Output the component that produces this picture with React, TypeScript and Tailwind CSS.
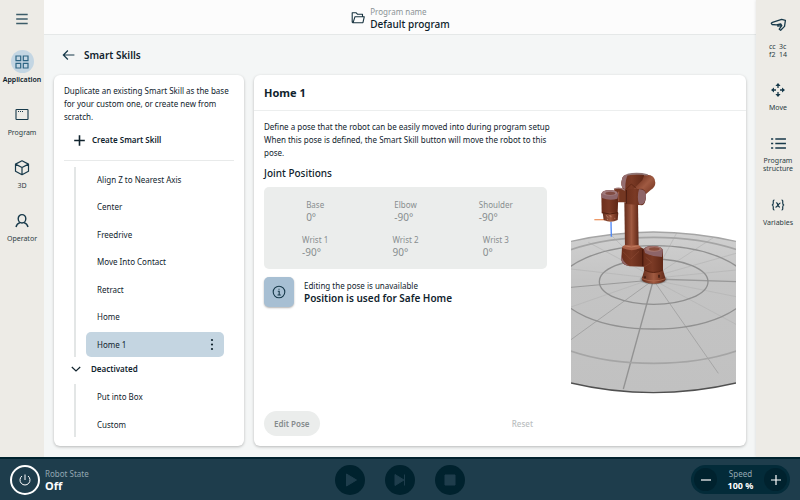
import React from 'react';

const skills = ['Align Z to Nearest Axis', 'Center', 'Freedrive', 'Move Into Contact', 'Retract', 'Home', 'Home 1'];
const deactivatedSkills = ['Put into Box', 'Custom'];

const joints = [
  { name: 'Base', value: '0°' },
  { name: 'Elbow', value: '-90°' },
  { name: 'Shoulder', value: '-90°' },
  { name: 'Wrist 1', value: '-90°' },
  { name: 'Wrist 2', value: '90°' },
  { name: 'Wrist 3', value: '0°' },
];

type IconProps = { className?: string; children: React.ReactNode; width?: number };

const Icon: React.FC<IconProps> = ({ className = 'size-4', children, width = 1 }) => (
  <svg
    viewBox="0 0 16 16"
    className={className}
    fill="none"
    stroke="currentColor"
    strokeWidth={width}
    aria-hidden="true"
  >
    {children}
  </svg>
);

const NavItem: React.FC<{ label: string; active?: boolean; children: React.ReactNode }> = ({ label, active, children }) => (
  <button
    type="button"
    className={
      active
        ? 'flex h-[53px] w-full flex-col items-center text-[7px] leading-[10px] font-semibold text-[#0b202a]'
        : 'flex h-[53px] w-full flex-col items-center text-[7px] leading-[10px] text-[#2b3b43]'
    }
  >
    <span
      className={
        active
          ? 'flex size-[23px] items-center justify-center rounded-full bg-[#c4d6e3] text-[#2e6584]'
          : 'flex size-[23px] items-center justify-center text-[#17394a]'
      }
    >
      {children}
    </span>
    <span className="mt-[2px]">{label}</span>
  </button>
);

const SkillRow: React.FC<{ name: string; selected?: boolean }> = ({ name, selected }) => (
  <li>
    <button
      type="button"
      className={
        selected
          ? 'flex h-[25px] w-full items-center justify-between rounded-[5px] bg-[#c4d5e1] pr-1 pl-[11px] text-left'
          : 'flex h-[25px] w-full items-center justify-between pr-1 pl-[11px] text-left'
      }
    >
      {name}
      {selected && (
        <Icon>
          <g fill="currentColor" stroke="none">
            <circle cx="8" cy="3" r="1.1" />
            <circle cx="8" cy="7.5" r="1.1" />
            <circle cx="8" cy="12" r="1.1" />
          </g>
        </Icon>
      )}
    </button>
  </li>
);

const RobotView: React.FC = () => (
  <svg viewBox="18 0 495 705" className="h-[235px] w-[165px] shrink-0" role="img" aria-label="Robot pose">
    <defs>
      <linearGradient id="floor" x1="0" y1="0" x2="0" y2="1">
        <stop offset="0" stopColor="#d0d0d0" />
        <stop offset="0.3" stopColor="#c4c4c4" />
        <stop offset="1" stopColor="#c1c1c1" />
      </linearGradient>
      <linearGradient id="tube" x1="0" y1="0" x2="1" y2="0">
        <stop offset="0" stopColor="#642d1c" />
        <stop offset="0.5" stopColor="#a05a41" />
        <stop offset="0.7" stopColor="#87442d" />
        <stop offset="1" stopColor="#5d2819" />
      </linearGradient>
      <linearGradient id="joint" x1="0" y1="0" x2="1" y2="0">
        <stop offset="0" stopColor="#6c2f1c" />
        <stop offset="0.45" stopColor="#7b3a25" />
        <stop offset="1" stopColor="#5f2716" />
      </linearGradient>
      <linearGradient id="arm" x1="0" y1="0" x2="1" y2="1">
        <stop offset="0.2" stopColor="#72331f" />
        <stop offset="0.5" stopColor="#a05a42" />
        <stop offset="0.9" stopColor="#6b2d1a" />
      </linearGradient>
      <radialGradient id="shade">
        <stop offset="0.6" stopColor="#222" />
        <stop offset="1" stopColor="#777" stopOpacity="0" />
      </radialGradient>
      <clipPath id="disc">
        <path d="M18 229 Q140 202 265 201 Q390 202 513 229 V654 Q390 683 265 683 Q140 683 18 654 Z" />
      </clipPath>
    </defs>

    <path d="M18 229 Q140 202 265 201 Q390 202 513 229 V654 Q390 683 265 683 Q140 683 18 654 Z" fill="url(#floor)" />
    <g clipPath="url(#disc)" fill="none" stroke="#999" strokeWidth="2">
      <path d="M265 345 L175 672" stroke="#929292" strokeWidth="4" />
      <path d="M265 345 L460 625" stroke="#a6a6a6" strokeWidth="3" />
      <path d="M265 345 L18 524" stroke="#a4a4a4" strokeWidth="3" />
      <path d="M265 345 L18 367" strokeWidth="3" />
      <path d="M265 342 L513 350" strokeWidth="4" />
      <path d="M265 340 L18 312 M265 340 L18 426 M265 345 L513 395 M265 345 L513 478 M265 340 L513 315 M265 335 L513 265 M265 335 L445 218 M265 335 L335 204 M265 335 L70 232 M265 335 L140 212" stroke="#b4b4b4" />
      <ellipse cx="266" cy="350" rx="163" ry="68" strokeWidth="4" stroke="#8f8f8f" />
      <ellipse cx="266" cy="367" rx="287" ry="125" strokeWidth="4" stroke="#919191" />
      <ellipse cx="266" cy="406" rx="417" ry="189" strokeWidth="5" stroke="#a5a5a5" />
    </g>
    <path d="M18 229 Q140 202 265 201 Q390 202 513 229" fill="none" stroke="#a5a5a5" strokeWidth="4" />
    <path d="M18 654 Q140 683 265 683 Q390 683 513 654" fill="none" stroke="#505050" strokeWidth="4" />

    {/* tool axes */}
    <path d="M88 164 H120" stroke="#ee9a68" strokeWidth="4" />
    <path d="M138 170 L139 215" stroke="#4d86f5" strokeWidth="4" />

    {/* base */}
    <ellipse cx="266" cy="343" rx="44" ry="17" fill="url(#shade)" />
    <path d="M238 315 L230 342 Q232 355 266 356 Q300 355 302 342 L294 315 Z" fill="url(#tube)" />
    <path d="M231 341 Q266 355 302 341" fill="none" stroke="#ba7356" strokeWidth="2" />
    <path d="M282 329 v9 M240 334 v6" stroke="#35160e" strokeWidth="4" />

    {/* upper arm and elbow */}
    <path d="M172 38 Q178 28 196 28 L238 27 L238 72 L180 78 Q168 68 169 52 Z" fill="url(#joint)" />
    <path d="M172 38 Q178 28 190 28 Q180 42 181 73 Q168 70 169 52 Z" fill="#956e70" />
    <path d="M238 30 Q270 26 271 53 Q271 66 257 75 L225 103 L200 77 L232 46 Z" fill="url(#arm)" />
    <path d="M188 29 Q216 22 248 30" fill="none" stroke="#8f7778" strokeWidth="5" />
    <path d="M181 75 L199 57 L214 70" fill="none" stroke="#55200f" strokeWidth="2" />
    <path d="M178 112 L219 112 L221 250 L180 250 Z" fill="url(#tube)" />
    <path d="M147 72 Q168 64 184 75 L184 112 L155 112 Z" fill="#743722" />
    <path d="M147 72 Q165 65 180 76" fill="none" stroke="#a07b7a" strokeWidth="4" />
    <path d="M161 80 V109" stroke="#a76049" strokeWidth="3" />
    <path d="M183 73 L232 71 Q244 76 243 96 Q241 119 231 121 L184 117 Z" fill="url(#joint)" />
    <path d="M222 73 Q245 72 243 96 Q240 122 222 118 Q215 97 222 73 Z" fill="#8e6568" />
    <path d="M184 75 V116" stroke="#46190e" strokeWidth="3" />

    {/* wrist */}
    <path d="M109 87 Q112 76 134 76 Q158 76 160 88 L158 145 L110 145 Z" fill="url(#joint)" />
    <path d="M109 88 Q112 75 134 75 Q158 76 160 88 L157 101 Q134 108 111 99 Z" fill="#8e666a" />
    <ellipse cx="134" cy="84" rx="23" ry="8" fill="#a17b7c" />
    <ellipse cx="136" cy="85" rx="15" ry="5" fill="#804b42" />
    <path d="M113 143 H160 L158 165 Q137 175 116 165 Z" fill="url(#tube)" />
    <path d="M112 143 Q134 151 159 143" fill="none" stroke="#50200f" strokeWidth="3" />
    <path d="M124 151 L129 158 M133 152 Q140 151 138 157 M126 163 h3 M148 160 h3" fill="none" stroke="#d09a83" strokeWidth="2" />

    {/* shoulder */}
    <path d="M171 247 Q199 258 227 247 L237 252 V305 L194 304 Q174 302 169 286 Z" fill="url(#joint)" />
    <path d="M171 258 Q165 288 194 303 L182 300 Q170 296 168 280 Z" fill="#8f6668" />
    <path d="M173 243 Q199 235 226 243 L227 249 Q200 262 172 249 Z" fill="#a85e45" />
    <path d="M177 242 Q199 250 222 242" fill="none" stroke="#c17b5d" strokeWidth="3" />
    <path d="M236 252 Q242 243 265 243 Q290 244 294 256 L294 315 Q266 330 237 314 Z" fill="url(#joint)" />
    <path d="M237 253 Q241 243 265 243 Q290 244 294 256 L291 276 Q263 276 240 264 Z" fill="#8d6468" />
    <ellipse cx="266" cy="252" rx="24" ry="8" fill="#a77871" />
    <ellipse cx="268" cy="252" rx="16" ry="5" fill="#8a4e3d" />
    <path d="M233 253 V303" stroke="#48180d" strokeWidth="3" />
    <path d="M174 260 L197 283 L222 259 M237 306 L260 292 L242 277" fill="none" stroke="#8d4a33" strokeWidth="2" />
    <path d="M238 315 Q266 330 294 315" fill="none" stroke="#592312" strokeWidth="3" />
  </svg>
);

const App: React.FC = () => {
  return (
    <div className="flex min-h-screen flex-col bg-[#f4f6f6] font-['Noto_Sans',sans-serif] text-[8px] leading-3 text-[#10232d]">
      <div className="flex grow">
        <nav className="flex w-11 shrink-0 flex-col bg-[#edebe6]" aria-label="Main">
          <button type="button" aria-label="Menu" className="flex h-[38px] items-center justify-center text-[#3c5c69]">
            <Icon width={1.3}>
              <path d="M2.200 3.500h11.500M2.200 8h11.500M2.200 12.500h11.500" />
            </Icon>
          </button>
          <div className="flex flex-col pt-3">
            <NavItem label="Application" active>
              <Icon width={1.2}>
                <path d="M2 2h4.700v4.700h-4.700zM9.300 2h4.700v4.700h-4.700zM2 9.300h4.700v4.700h-4.700zM9.300 9.300h4.700v4.700h-4.700z" />
              </Icon>
            </NavItem>
            <NavItem label="Program">
              <Icon width={1.1}>
                <rect x="2" y="2.500" width="12" height="10" rx="0.600" />
                <path d="M4 4.500h1M6 4.500h1M8 4.500h1" />
              </Icon>
            </NavItem>
            <NavItem label="3D">
              <Icon width={1.2}>
                <path d="M8 0.800L14.500 4.100V11.200L8 14.700L1.500 11.200V4.100zM1.500 4.100L8 7.500L14.500 4.100M8 7.500V14.700" strokeLinejoin="round" />
              </Icon>
            </NavItem>
            <NavItem label="Operator">
              <Icon width={1.4}>
                <ellipse cx="8" cy="5.800" rx="3.800" ry="4.200" />
                <path d="M2 14C2.500 11.500 4 10.200 6 9.600M14 14C13.500 11.500 12 10.200 10 9.600" />
              </Icon>
            </NavItem>
          </div>
        </nav>

        <div className="flex min-w-0 grow flex-col">
          <header className="flex h-[35px] items-center justify-center gap-1 border-b border-[#e5e8e8] bg-[#fcfcfc] pt-px">
            <Icon className="size-4 text-[#17333f]" width={1.1}>
              <path d="M3 12.800L2.200 12V2.700H6L7.400 4.200H12.500V6.700M3 12.800L5 6.700H14.300L13 12.300L12.500 12.800Z" strokeLinejoin="round" />
            </Icon>
            <div>
              <p className="text-[8px] leading-3 text-[#8b9396]">Program name</p>
              <p className="text-[10px] leading-3 font-medium text-[#0b202a]">Default program</p>
            </div>
          </header>

          <main className="flex grow flex-col px-[10px] pb-[11px]">
            <div className="flex h-10 items-center gap-[6px] pl-[6px]">
              <button type="button" aria-label="Back" className="text-[#17394a]">
                <Icon className="size-[18px]" width={1.1}>
                  <path d="M12.800 8H3M7 4L3 8L7 12" />
                </Icon>
              </button>
              <h1 className="text-[10px] leading-4 font-semibold">Smart Skills</h1>
            </div>

            <div className="flex grow gap-[10px]">
              <aside className="w-[190px] shrink-0 rounded-md bg-white px-[10px] py-[9px] shadow-[0_1px_3px_rgba(0,0,0,0.25)]">
                <p className="leading-[13px]">
                  Duplicate an existing Smart Skill as the base for your custom one, or create new from scratch.
                </p>
                <button type="button" className="mt-[5px] flex h-6 items-center gap-1 pl-[7px] font-semibold">
                  <Icon className="size-[17px]" width={1.5}>
                    <path d="M3 8H13M8 3V13" />
                  </Icon>
                  Create Smart Skill
                </button>
                <hr className="mt-2 border-[#e8eaea]" />
                <ul className="mt-[6px] mr-[10px] ml-[10px] flex h-[190px] flex-col justify-between border-l-2 border-[#e3e6e6] pl-[10px]">
                  {skills.map((name) => (
                    <SkillRow key={name} name={name} selected={name === 'Home 1'} />
                  ))}
                </ul>
                <button type="button" className="flex h-6 items-center gap-[7px] pl-1 font-semibold">
                  <Icon width={1.2}>
                    <path d="M3.800 6L8 10L12.200 6" />
                  </Icon>
                  Deactivated
                </button>
                <ul className="mt-[3px] mr-[10px] ml-[10px] flex h-[53px] flex-col justify-between border-l-2 border-[#e3e6e6] pl-[10px]">
                  {deactivatedSkills.map((name) => (
                    <SkillRow key={name} name={name} />
                  ))}
                </ul>
              </aside>

              <section className="flex min-w-0 grow flex-col rounded-md bg-white shadow-[0_1px_3px_rgba(0,0,0,0.25)]">
                <h2 className="flex h-9 items-center border-b border-[#eceeee] px-[10px] text-[11px] leading-4 font-bold">
                  Home 1
                </h2>
                <div className="flex grow gap-6 px-[10px] pt-[9px] pb-[10px]">
                  <div className="flex min-w-0 grow flex-col">
                    <p className="-mr-2 leading-[13px]">
                      Define a pose that the robot can be easily moved into during program setup
                      <br />
                      When this pose is defined, the Smart Skill button will move the robot to this pose.
                    </p>
                    <h3 className="mt-2 text-[10px] leading-3 font-medium">Joint Positions</h3>
                    <dl className="mt-2 grid h-[82px] grid-cols-3 content-center gap-y-[11px] rounded-[5px] bg-[#ebedec] px-[6px] text-[#888d8f]">
                      {joints.map((joint) => (
                        <div key={joint.name} className="justify-self-center">
                          <dt className="text-[8px] leading-3">{joint.name}</dt>
                          <dd className="text-[10px] leading-3">{joint.value}</dd>
                        </div>
                      ))}
                    </dl>
                    <div className="mt-2 flex items-center gap-[10px]">
                      <span className="flex size-[30px] items-center justify-center rounded-[5px] bg-[#a7bfd3] text-[#17394a] shadow-[0_1px_2px_rgba(0,0,0,0.3)]">
                        <Icon width={1.1}>
                          <circle cx="8" cy="8" r="5.800" />
                          <path d="M6.800 7.300H8.200V11M6.500 11H9.800M7.500 5.200H8.500" />
                        </Icon>
                      </span>
                      <div>
                        <p className="text-[8px] leading-3">Editing the pose is unavailable</p>
                        <p className="text-[10px] leading-3 font-semibold">Position is used for Safe Home</p>
                      </div>
                    </div>
                    <div className="mt-auto flex items-center justify-between">
                      <button
                        type="button"
                        disabled
                        className="h-[25px] rounded-full bg-[#ebedec] px-[10px] font-semibold text-[#858b8c]"
                      >
                        Edit Pose
                      </button>
                      <button type="button" disabled className="h-[25px] px-[14px] font-medium text-[#bbc0c1]">
                        Reset
                      </button>
                    </div>
                  </div>
                  <div className="flex items-center pt-2">
                    <RobotView />
                  </div>
                </div>
              </section>
            </div>
          </main>
        </div>

        <nav className="flex w-11 shrink-0 flex-col bg-[#edebe6] pt-[13px] shadow-[0_0_3px_rgba(0,0,0,0.12)]" aria-label="Tools">
          <button type="button" className="flex h-[65px] flex-col items-center text-[7px] leading-2 text-[#2b3b43]">
            <span className="flex h-[30px] text-[#17394a]">
              <Icon className="size-[23px]" width={0.9}>
                <path d="M3.800 6.500L10.200 4.500L12.800 5.200L12.200 9.300L9.500 12L8.500 11.300L10.300 8.800L9.500 7.500L6.500 8.200L3.500 8L3 7.200ZM8 7.800L7.500 9.200L9 9L9.500 7.500" strokeLinejoin="round" />
              </Icon>
            </span>
            <span className="grid grid-cols-2 gap-x-[2px] text-left">
              <span>cc</span>
              <span>3c</span>
              <span>f2</span>
              <span>14</span>
            </span>
          </button>
          <NavItem label="Move">
            <Icon width={1.3}>
              <path d="M8 2V6M8 10V14M2 8H6M10 8H14" />
              <path
                d="M8 1L10.600 4H5.400ZM8 15L10.600 12H5.400ZM1 8L4 5.400V10.600ZM15 8L12 5.400V10.600Z"
                fill="currentColor"
                stroke="none"
              />
            </Icon>
          </NavItem>
          <button type="button" className="flex h-[61px] flex-col items-center text-[7px] leading-2 text-[#2b3b43]">
            <span className="flex h-[25px] items-center text-[#17394a]">
              <Icon className="size-[17px]" width={1.5}>
                <path d="M1 3.800H3M1 8H3M1 12.200H3M5 3.800H15M5 8H15M5 12.200H15" />
              </Icon>
            </span>
            <span className="mt-px">
              Program
              <br />
              structure
            </span>
          </button>
          <button type="button" className="flex h-[53px] flex-col items-center text-[7px] leading-[10px] text-[#2b3b43]">
            <span className="flex h-[25px] items-center text-[#17394a]">
              <Icon width={1.2}>
                <path d="M4.500 3C2.800 3 3.300 4.500 3.300 6S3 8 1.800 8C3 8 3.300 8.500 3.300 10S2.800 13 4.500 13M11.500 3C13.200 3 12.700 4.500 12.700 6S13 8 14.200 8C13 8 12.700 8.500 12.700 10S13.200 13 11.500 13M6 6C8 5 7.500 10.500 10 10M10.500 6C8.500 6 7.500 10.500 5.500 10" />
              </Icon>
            </span>
            <span className="mt-px">Variables</span>
          </button>
        </nav>
      </div>

      <footer className="grid h-11 shrink-0 grid-cols-[1fr_auto_1fr] items-center border-t-2 border-[#00222e] bg-[#1e3d4c] px-[10px] pb-px text-white">
        <div className="flex items-center gap-[5px]">
          <button
            type="button"
            aria-label="Power"
            className="flex size-[30px] items-center justify-center rounded-full border-2 border-white"
          >
            <Icon>
              <path d="M8 2.500V8M5 4A5 5 0 1 0 11 4" />
            </Icon>
          </button>
          <div>
            <p className="text-[8px] leading-3 text-[#93a7b2]">Robot State</p>
            <p className="text-[11px] leading-3 font-bold">Off</p>
          </div>
        </div>
        <div className="flex gap-5 text-[#1e3d4c]">
          <button type="button" aria-label="Play" className="flex size-[30px] items-center justify-center rounded-full bg-[#00222e]">
            <Icon>
              <path d="M4.500 2L14.500 8L4.500 14Z" fill="currentColor" />
            </Icon>
          </button>
          <button type="button" aria-label="Step" className="flex size-[30px] items-center justify-center rounded-full bg-[#00222e]">
            <Icon>
              <path d="M3 2.500L12 8L3 13.500ZM12.500 2.500V13.500" fill="currentColor" />
            </Icon>
          </button>
          <button type="button" aria-label="Stop" className="flex size-[30px] items-center justify-center rounded-full bg-[#00222e]">
            <Icon>
              <path d="M3 3H13V13H3Z" fill="currentColor" />
            </Icon>
          </button>
        </div>
        <div className="flex h-[29px] w-[99px] items-center justify-between justify-self-end rounded-full bg-[#032b39] px-[3px]">
          <button type="button" aria-label="Decrease speed" className="flex size-[23px] items-center justify-center rounded-full bg-[#00222e]">
            <Icon width={1.2}>
              <path d="M3 8H13" />
            </Icon>
          </button>
          <div className="text-center">
            <p className="text-[8px] leading-3 text-[#93a7b2]">Speed</p>
            <p className="text-[9px] leading-3 font-bold">100 %</p>
          </div>
          <button type="button" aria-label="Increase speed" className="flex size-[23px] items-center justify-center rounded-full bg-[#00222e]">
            <Icon width={1.2}>
              <path d="M3 8H13M8 3V13" />
            </Icon>
          </button>
        </div>
      </footer>
    </div>
  );
};

export default App;
